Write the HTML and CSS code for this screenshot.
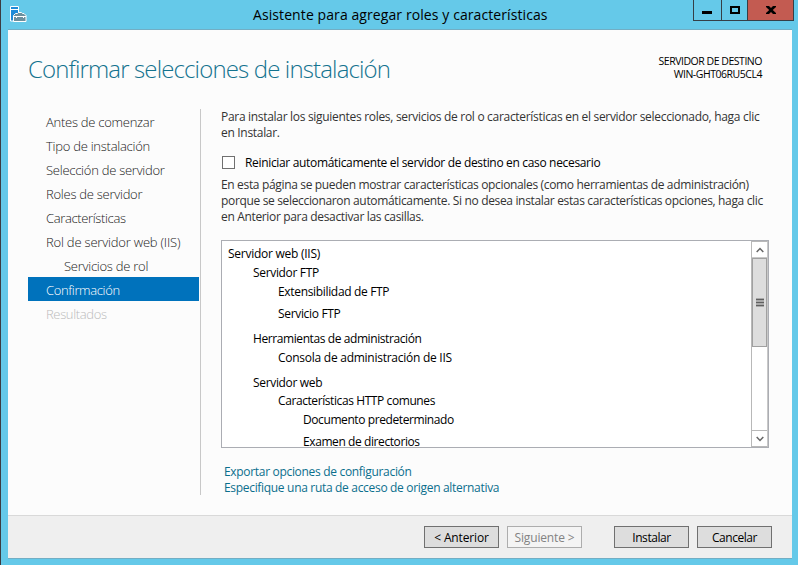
FILE: index.html
```html
<!DOCTYPE html>
<html lang="es">
<head>
<meta charset="utf-8">
<title>Asistente para agregar roles y características</title>
<link rel="stylesheet" href="styles.css">
</head>
<body>
<div class="window">
  <header class="titlebar">
    <svg class="app-icon" width="17" height="17" viewBox="0 0 17 17">
      <path d="M.5.5h8v14.500h-8z" fill="#1e8bd8" stroke="#fff"/>
      <path d="M1 3.500h7" stroke="#fff"/>
      <path d="M3.500 15.500v-6L5.500 7.500h2L8.500 6.500h3l1 1h1.500l2 2v6z" fill="#6c909e" stroke="#fff"/>
      <path d="M4 10.500h12M6.500 10v2M13.500 10v2" stroke="#fff" fill="none"/>
    </svg>
    <h1 class="title">Asistente para agregar roles y características</h1>
    <div class="controls">
      <span class="control minimize"><svg width="10" height="12"><path d="M0 8.500h10" stroke="#000" stroke-width="3"/></svg></span>
      <span class="control maximize"><svg width="10" height="8"><path d="M1 1h8v6H1z" fill="none" stroke="#000" stroke-width="2"/></svg></span>
      <span class="control close"><svg width="10" height="8"><path d="M0 0h3l2 2 2-2h3v1L6.800 4 10 7v1H7L5 6 3 8H0V7l3.200-3L0 1z"/></svg></span>
    </div>
  </header>
  <main class="client">
    <div class="heading">
      <h2 class="page-title">Confirmar selecciones de instalación</h2>
      <div class="server"><span>SERVIDOR DE DESTINO</span><span>WIN-GHT06RU5CL4</span></div>
    </div>
    <div class="body">
      <nav class="steps">
        <span class="step">Antes de comenzar</span>
        <span class="step">Tipo de instalación</span>
        <span class="step">Selección de servidor</span>
        <span class="step">Roles de servidor</span>
        <span class="step narrow">Características</span>
        <span class="step wide">Rol de servidor web (IIS)</span>
        <span class="step sub">Servicios de rol</span>
        <span class="step narrow current">Confirmación</span>
        <span class="step narrow disabled">Resultados</span>
      </nav>
      <section class="content">
        <p class="text intro"><span class="line">Para instalar los siguientes roles, servicios de rol o características en el servidor seleccionado, haga clic</span><span class="line">en Instalar.</span></p>
        <div class="check"><span class="box"></span><span class="check-label">Reiniciar automáticamente el servidor de destino en caso necesario</span></div>
        <p class="text note"><span class="line">En esta página se pueden mostrar características opcionales (como herramientas de administración)</span><span class="line">porque se seleccionaron automáticamente. Si no desea instalar estas características opciones, haga clic</span><span class="line">en Anterior para desactivar las casillas.</span></p>
        <div class="listbox">
          <div class="tree">
            <span class="item wide">Servidor web (IIS)</span>
            <span class="item l1">Servidor FTP</span>
            <span class="item l2">Extensibilidad de FTP</span>
            <span class="item l2 gap-s">Servicio FTP</span>
            <span class="item l1 gap-m narrow">Herramientas de administración</span>
            <span class="item l2 wide">Consola de administración de IIS</span>
            <span class="item l1 gap-m">Servidor web</span>
            <span class="item l2 tight narrow">Características HTTP comunes</span>
            <span class="item l3 narrow">Documento predeterminado</span>
            <span class="item l3 gap-s narrow">Examen de directorios</span>
          </div>
          <div class="scrollbar">
            <span class="arrow"><svg width="8" height="6"><path d="M.7 5L4 1.500 7.300 5" fill="none" stroke="#666" stroke-width="1.500"/></svg></span>
            <span class="thumb"><svg width="8" height="9"><path d="M0 0h8v9H0z" fill="#aaa"/><path d="M0 1.500h8M0 4.500h8M0 7.500h8" stroke="#606060"/></svg></span>
            <span class="arrow down"><svg width="8" height="6"><path d="M.7 1L4 4.500 7.300 1" fill="none" stroke="#666" stroke-width="1.500"/></svg></span>
          </div>
        </div>
        <div class="links">
          <a class="link">Exportar opciones de configuración</a>
          <a class="link">Especifique una ruta de acceso de origen alternativa</a>
        </div>
      </section>
    </div>
    <footer class="footer">
      <button class="btn back">&lt; Anterior</button>
      <button class="btn next" disabled>Siguiente &gt;</button>
      <button class="btn install">Instalar</button>
      <button class="btn">Cancelar</button>
    </footer>
  </main>
</div>
</body>
</html>
```
FILE: styles.css
```css
* { box-sizing: border-box; }
body { margin: 0; font-family: "Open Sans", "Noto Sans", sans-serif; font-size: 12px; line-height: 16px; color: #000; }
h1, h2, p { margin: 0; font-weight: 400; }
svg { display: block; }
.window { width: 798px; height: 565px; padding: 0 6px 6px 7px; background: #65c9e9; border-left: 1px solid #3c3c42; display: flex; flex-direction: column; overflow: hidden; }
.titlebar { height: 29px; flex: none; display: flex; align-items: flex-start; position: relative; }
.app-icon { margin: 6px 0 0 2px; }
.title { position: absolute; left: 245px; top: 5px; font-size: 14px; line-height: 20px; white-space: nowrap; letter-spacing: 0.09px; }
.controls { margin-left: auto; height: 21px; display: flex; border: 1px solid #353f46; border-top: 0; margin-right: -2px; }
.control { height: 20px; display: flex; align-items: center; justify-content: center; }
.minimize { width: 28px; padding-right: 1px; border-right: 1px solid #353f46; }
.maximize { width: 26px; padding-left: 1px; border-right: 1px solid #353f46; }
.close { width: 45px; background: #c35b51; }
.client { height: 530px; display: flex; flex-direction: column; background: #fcfcfc; border-top: 1px solid #72aec4; border-bottom: 1px solid #72aec4; }
.heading { height: 79px; flex: none; display: flex; justify-content: space-between; padding: 0 30px 0 20px; }
.page-title { font-size: 24px; font-weight: 300; line-height: 32px; padding-top: 23px; color: #14738f; white-space: nowrap; letter-spacing: -0.86px; }
.server { display: flex; flex-direction: column; align-items: flex-end; padding-top: 25px; font-size: 10.500px; line-height: 13px; white-space: nowrap; letter-spacing: -0.47px; }
.body { flex: 1; display: flex; }
.steps { width: 193px; height: 386px; padding: 0 1px 0 20px; border-right: 1px solid #c8c8c8; display: flex; flex-direction: column; flex: none; font-size: 13px; }
.step { height: 24px; padding: 1px 0 0 18px; line-height: 24px; color: #222; white-space: nowrap; font-weight: 300; letter-spacing: -0.26px; }
.step.narrow { letter-spacing: -0.36px; }
.step.wide { letter-spacing: -0.2px; }
.sub { padding-left: 36px; }
.current { background: #0072bc; color: #fff; }
.disabled { color: #bbb; }
.content { width: 548px; margin-left: 20px; }
.text { color: #333; }
.line { display: block; white-space: nowrap; }
.intro { letter-spacing: -0.305px; }
.note { letter-spacing: -0.34px; }
.check { height: 36px; display: flex; align-items: center; padding: 7px 0 0 1px; }
.box { width: 13px; height: 13px; border: 1px solid #707070; background: #fff; margin-right: 10px; }
.check-label { white-space: nowrap; padding-top: 1px; letter-spacing: -0.33px; }
.listbox { width: 548px; height: 208px; margin-top: 15px; display: flex; background: #fff; border: 1px solid #abadb3; overflow: hidden; }
.tree { flex: 1; padding: 3px 0 0 6px; display: flex; flex-direction: column; }
.item { height: 19px; line-height: 19px; flex: none; white-space: nowrap; letter-spacing: -0.33px; }
.item.narrow { letter-spacing: -0.41px; }
.item.wide { letter-spacing: -0.26px; }
.l1 { padding-left: 25px; }
.l2 { padding-left: 50px; }
.l3 { padding-left: 75px; }
.gap-s { margin-top: 3px; }
.gap-m { margin-top: 6px; }
.tight { margin-top: -1px; }
.scrollbar { width: 17px; border: 1px solid #b8b8b8; border-right-color: #c8c8c8; display: flex; flex-direction: column; }
.arrow { height: 16px; display: flex; align-items: center; justify-content: center; flex: none; border-bottom: 1px solid #c8c8c8; }
.thumb { height: 89px; background: #ddd; border: 1px solid #a0a0a0; display: flex; align-items: center; justify-content: center; flex: none; }
.down { margin-top: auto; border-bottom: 0; border-top: 1px solid #b8b8b8; }
.links { display: flex; flex-direction: column; align-items: flex-start; padding: 16px 0 0 3px; }
.link { color: #0b6f8d; white-space: nowrap; letter-spacing: -0.315px; }
.footer { height: 43px; flex: none; background: #efefef; border-top: 1px solid #d9d9d9; display: flex; justify-content: flex-end; padding: 10px 20px 0 0; gap: 8px; }
.btn { width: 75px; height: 22px; padding: 1px 0 0; border: 1px solid #707070; background: #ddd; font: inherit; line-height: 19px; color: #000; white-space: nowrap; letter-spacing: -0.45px; }
.btn:disabled { border-color: #adadad; background: #f4f4f4; color: #838383; }
.back, .next { letter-spacing: -0.15px; }
.install { margin-left: 24px; }
```
